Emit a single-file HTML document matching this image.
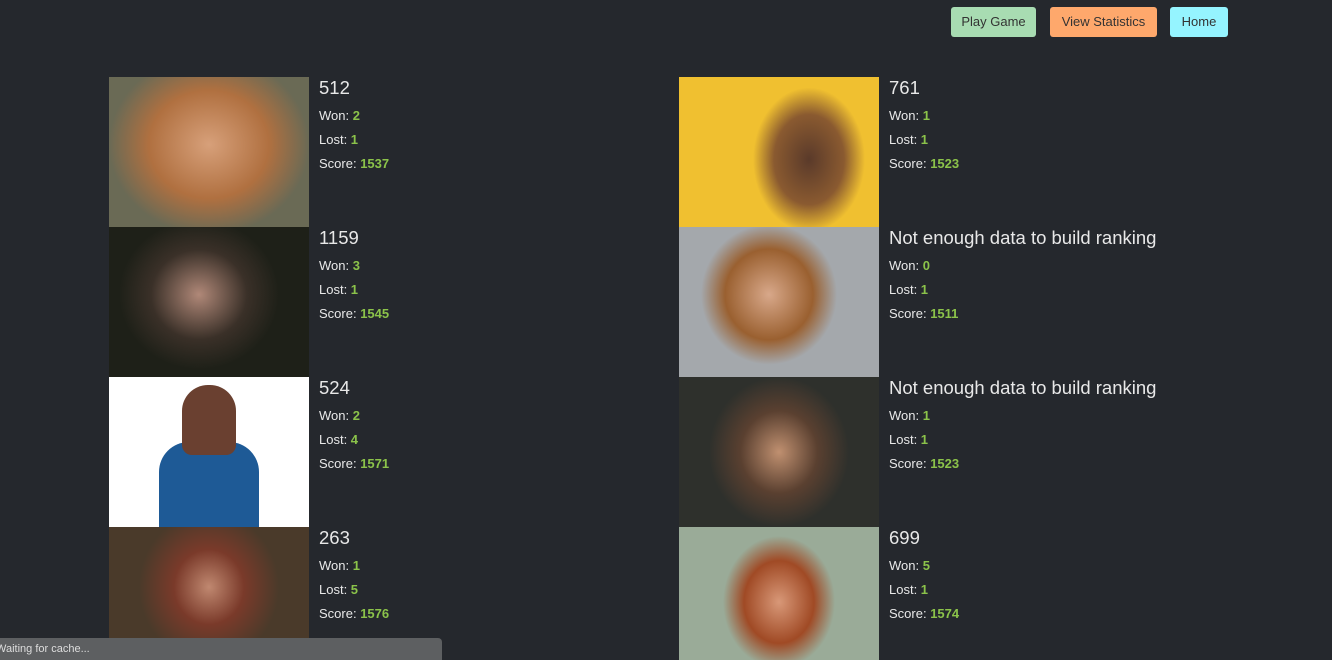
<!DOCTYPE html>
<html style="height:660px;overflow:hidden"><head><style>
body{margin:0;width:1332px;height:660px;overflow:hidden;background:#25282d;font-family:"Liberation Sans",sans-serif;position:relative}
.btn{position:absolute;top:7px;height:30px;border-radius:3px;font-size:13px;color:#333;line-height:30px;text-align:center}
.card{position:absolute;width:560px;height:150px}
.img{position:absolute;left:0;top:0;width:200px;height:150px}
.info{position:absolute;left:210px;top:2px;color:#e8e8e8}
.t{font-size:18.5px;margin-top:-2px;height:30px;line-height:22px;padding-top:0}
.l{font-size:13px;height:24px;line-height:18px}
.l b{color:#8bc34a}
#st{position:absolute;left:0;top:638px;width:442px;height:22px;background:#5d5f61;color:#ddd;font-size:11px;line-height:22px;border-top-right-radius:4px;text-indent:-4px}
</style></head><body>
<div class="btn" style="left:951px;width:85px;background:#a8dcb2">Play Game</div>
<div class="btn" style="left:1050px;width:107px;background:#fea86c">View Statistics</div>
<div class="btn" style="left:1170px;width:58px;background:#95f4ff">Home</div>

<div class="card" style="left:109px;top:77px"><div class="img" style="background:radial-gradient(ellipse 50% 60% at 50% 45%,#d7a07a,#b07040 60%,#6a6a55)"></div><div class="info"><div class="t">512</div><div class="l">Won: <b>2</b></div><div class="l">Lost: <b>1</b></div><div class="l">Score: <b>1537</b></div></div></div>
<div class="card" style="left:679px;top:77px"><div class="img" style="background:radial-gradient(ellipse 35% 60% at 65% 55%,#5a3a2a,#8a5a30 50%,#f0c030 80%)"></div><div class="info"><div class="t">761</div><div class="l">Won: <b>1</b></div><div class="l">Lost: <b>1</b></div><div class="l">Score: <b>1523</b></div></div></div>

<div class="card" style="left:109px;top:227px"><div class="img" style="background:radial-gradient(ellipse 40% 50% at 45% 45%,#b08878,#3a3028 60%,#1e2018)"></div><div class="info"><div class="t">1159</div><div class="l">Won: <b>3</b></div><div class="l">Lost: <b>1</b></div><div class="l">Score: <b>1545</b></div></div></div>
<div class="card" style="left:679px;top:227px"><div class="img" style="background:radial-gradient(ellipse 40% 55% at 45% 45%,#d8a88a,#9a6030 55%,#a4a8ac 85%)"></div><div class="info"><div class="t">Not enough data to build ranking</div><div class="l">Won: <b>0</b></div><div class="l">Lost: <b>1</b></div><div class="l">Score: <b>1511</b></div></div></div>

<div class="card" style="left:109px;top:377px"><div class="img" style="background:#fff"><div style="position:absolute;left:50px;top:65px;width:100px;height:85px;background:#1e5a96;border-radius:30px 30px 0 0"></div><div style="position:absolute;left:73px;top:8px;width:54px;height:70px;background:#6a4030;border-radius:26px 26px 10px 10px"></div></div><div class="info"><div class="t">524</div><div class="l">Won: <b>2</b></div><div class="l">Lost: <b>4</b></div><div class="l">Score: <b>1571</b></div></div></div>
<div class="card" style="left:679px;top:377px"><div class="img" style="background:radial-gradient(ellipse 35% 50% at 50% 50%,#c09070,#5a4030 55%,#2e302c)"></div><div class="info"><div class="t">Not enough data to build ranking</div><div class="l">Won: <b>1</b></div><div class="l">Lost: <b>1</b></div><div class="l">Score: <b>1523</b></div></div></div>

<div class="card" style="left:109px;top:527px;height:133px;overflow:hidden"><div class="img" style="background:radial-gradient(ellipse 35% 50% at 50% 40%,#c08870,#7a3a2a 50%,#4a3a2a)"></div><div class="info"><div class="t">263</div><div class="l">Won: <b>1</b></div><div class="l">Lost: <b>5</b></div><div class="l">Score: <b>1576</b></div></div></div>
<div class="card" style="left:679px;top:527px;height:133px;overflow:hidden"><div class="img" style="background:radial-gradient(ellipse 35% 55% at 50% 50%,#d89878,#a04a25 50%,#9aab98 80%)"></div><div class="info"><div class="t">699</div><div class="l">Won: <b>5</b></div><div class="l">Lost: <b>1</b></div><div class="l">Score: <b>1574</b></div></div></div>

<div id="st">Waiting for cache...</div>
</body></html>
